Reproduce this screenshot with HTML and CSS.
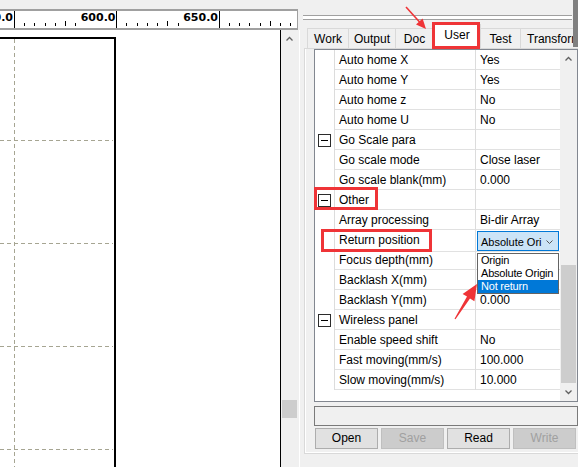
FILE: index.html
```html
<!DOCTYPE html>
<html>
<head>
<meta charset="utf-8">
<link rel="stylesheet" href="styles.css">
</head>
<body>
<div class="app">
  <div class="left">
    <div class="topgap"></div>
    <div class="ruler">
      <svg class="ruler-svg" width="297" height="17" viewBox="0 0 297 17">
        <path d="M24.5 12V15M34.5 12V15M45.5 12V15M55.5 12V15M75.5 12V15M126.5 12V15M137.5 12V15M147.5 12V15M157.5 12V15M178.5 12V15M229.5 12V15M239.5 12V15M249.5 12V15M260.5 12V15M280.5 12V15M290.5 12V15" stroke="#000" stroke-width="1"/>
        <path d="M65.5 10V15M167.5 10V15M270.5 10V15" stroke="#000" stroke-width="1"/>
        <path d="M14.5 0V17M116.5 0V17M219.5 0V17" stroke="#000" stroke-width="1"/>
        <text class="rl" x="13" y="10" text-anchor="end">550.0</text>
        <text class="rl" x="115.5" y="10" text-anchor="end">600.0</text>
        <text class="rl" x="218" y="10" text-anchor="end">650.0</text>
      </svg>
    </div>
    <div class="work">
      <div class="canvas">
        <svg width="280" height="437" viewBox="0 0 280 437">
          <g stroke="#a6a592" stroke-width="1" stroke-dasharray="4 3" fill="none">
            <path d="M14.5 9V437"/>
            <path d="M0 110.5H113M0 213.5H113M0 316.5H113M0 419.5H113"/>
          </g>
          <path d="M0 8H116M115 7V437" stroke="#000" stroke-width="2" fill="none"/>
        </svg>
      </div>
      <div class="vscroll">
        <div class="sbtn"><svg width="7" height="5" viewBox="0 0 7 5"><path d="M0.5 4.5L3.5 1.5L6.5 4.5" fill="none" stroke="#606060" stroke-width="1.3"/></svg></div>
        <div class="vtrack"><div class="vthumb"></div></div>
      </div>
      <div class="sep"></div>
    </div>
  </div>

  <div class="right">
    <div class="grip"><div class="grip-line"></div></div>
    <div class="tabs">
      <div class="tab tab-work">Work</div>
      <div class="tab tab-output">Output</div>
      <div class="tab tab-doc">Doc</div>
      <div class="tab tab-user sel">User</div>
      <div class="tab tab-test">Test</div>
      <div class="tab tab-transform">Transform</div>
    </div>
    <div class="tabbody">
      <div class="page">
        <div class="grid">
          <div class="rows">
            <div class="row"><div class="cat"></div><div class="name">Auto home X</div><div class="val">Yes</div></div>
            <div class="row"><div class="cat"></div><div class="name">Auto home Y</div><div class="val">Yes</div></div>
            <div class="row"><div class="cat"></div><div class="name">Auto home z</div><div class="val">No</div></div>
            <div class="row"><div class="cat"></div><div class="name">Auto home U</div><div class="val">No</div></div>
            <div class="row"><div class="cat"><span class="toggle"></span></div><div class="name">Go Scale para</div><div class="val"></div></div>
            <div class="row"><div class="cat"></div><div class="name">Go scale mode</div><div class="val">Close laser</div></div>
            <div class="row"><div class="cat"></div><div class="name">Go scale blank(mm)</div><div class="val">0.000</div></div>
            <div class="row"><div class="cat"><span class="toggle"></span></div><div class="name">Other</div><div class="val"></div></div>
            <div class="row"><div class="cat"></div><div class="name">Array processing</div><div class="val">Bi-dir Array</div></div>
            <div class="row"><div class="cat"></div><div class="name">Return position</div>
              <div class="val has-combo">
                <div class="combo">
                  <span>Absolute Ori</span>
                  <svg width="7" height="4" viewBox="0 0 7 4"><path d="M0.5 0.5L3.5 3.5L6.5 0.5" fill="none" stroke="#555" stroke-width="1"/></svg>
                  <div class="dropdown">
                    <div class="opt">Origin</div>
                    <div class="opt">Absolute Origin</div>
                    <div class="opt hl">Not return</div>
                  </div>
                </div>
              </div>
            </div>
            <div class="row"><div class="cat"></div><div class="name">Focus depth(mm)</div><div class="val"></div></div>
            <div class="row"><div class="cat"></div><div class="name">Backlash X(mm)</div><div class="val"></div></div>
            <div class="row"><div class="cat"></div><div class="name">Backlash Y(mm)</div><div class="val">0.000</div></div>
            <div class="row"><div class="cat"><span class="toggle"></span></div><div class="name">Wireless panel</div><div class="val"></div></div>
            <div class="row"><div class="cat"></div><div class="name">Enable speed shift</div><div class="val">No</div></div>
            <div class="row"><div class="cat"></div><div class="name">Fast moving(mm/s)</div><div class="val">100.000</div></div>
            <div class="row"><div class="cat"></div><div class="name">Slow moving(mm/s)</div><div class="val">10.000</div></div>
          </div>
          <div class="gscroll">
            <div class="sbtn"><svg width="7" height="5" viewBox="0 0 7 5"><path d="M0.5 4.5L3.5 1.5L6.5 4.5" fill="none" stroke="#606060" stroke-width="1.3"/></svg></div>
            <div class="gtrack"><div class="gthumb"></div></div>
            <div class="sbtn"><svg width="7" height="5" viewBox="0 0 7 5"><path d="M0.5 0.5L3.5 3.5L6.5 0.5" fill="none" stroke="#606060" stroke-width="1.3"/></svg></div>
          </div>
        </div>
        <div class="desc"></div>
        <div class="buttons">
          <button class="btn">Open</button>
          <button class="btn dis">Save</button>
          <button class="btn">Read</button>
          <button class="btn dis">Write</button>
        </div>
      </div>
    </div>
  </div>

  <div class="topstrip"></div>

  <svg class="annot" width="578" height="467" viewBox="0 0 578 467">
    <g fill="none" stroke="#ef3437" stroke-width="3">
      <rect x="433.5" y="23.5" width="45" height="24"/>
      <rect x="315.5" y="188.5" width="61" height="20"/>
      <rect x="322.5" y="230.5" width="108" height="20"/>
    </g>
    <line x1="406" y1="7" x2="420" y2="22.5" stroke="#ef3437" stroke-width="1.6"/>
    <polygon points="426,29 416,24.6 422.6,18.6" fill="#ef3437"/>
    <polygon points="455.5,319.3 470,298.6 474.4,301.3 477,284 462.6,293.9 467,296.6 454.5,318.7" fill="#ef3437"/>
  </svg>
</div>
</body>
</html>
```

FILE: styles.css
```css
html, body {
  margin: 0;
  padding: 0;
}
body {
  width: 578px;
  height: 467px;
  overflow: hidden;
  background: #f0f0f0;
  font-family: "Liberation Sans", Arial, sans-serif;
  font-size: 12px;
  color: #000;
}
.app {
  position: relative;
  display: flex;
  width: 600px;
  height: 467px;
}

/* ---------- left: ruler + canvas ---------- */
.left {
  width: 300px;
  flex: none;
  display: flex;
  flex-direction: column;
}
.topgap {
  height: 9px;
}
.ruler {
  width: 297px;
  height: 17px;
  background: #fff;
  border-top: 2px solid #a0a0a0;
  border-bottom: 2px solid #a0a0a0;
  border-right: 1px solid #a0a0a0;
}
.ruler-svg {
  display: block;
}
.rl {
  font-family: "DejaVu Sans", sans-serif;
  font-weight: bold;
  font-size: 11px;
  fill: #000;
}
.work {
  flex: 1;
  display: flex;
  min-height: 0;
}
.canvas {
  width: 280px;
  background: #fff;
  border-right: 1px solid #000;
  overflow: hidden;
}
.canvas svg {
  display: block;
}
.vscroll {
  width: 17px;
  background: #f0f0f0;
  display: flex;
  flex-direction: column;
}
.sbtn {
  height: 17px;
  flex: none;
  display: flex;
  align-items: center;
  justify-content: center;
}
.sbtn svg {
  display: block;
}
.vtrack {
  flex: 1;
  padding-top: 353px;
}
.vthumb {
  height: 18px;
  margin: 0 1px;
  background: #cdcdcd;
}
.sep {
  width: 2px;
  box-sizing: border-box;
  border-right: 1px solid #fff;
}

/* ---------- right panel ---------- */
.right {
  width: 300px;
  flex: none;
  display: flex;
  flex-direction: column;
}
.grip {
  height: 28px;
  box-sizing: border-box;
  padding: 15px 0 0 3px;
}
.grip-line {
  width: 269px;
  height: 5px;
  box-sizing: border-box;
  border-top: 1px solid #a0a0a0;
  border-bottom: 1px solid #a0a0a0;
  background: #fff;
}
.tabs {
  height: 20px;
  display: flex;
  align-items: flex-end;
  padding-left: 7px;
}
.tab {
  height: 20px;
  box-sizing: border-box;
  border: 1px solid #d9d9d9;
  border-bottom: none;
  margin-right: -1px;
  background: #f0f0f0;
  text-align: center;
  line-height: 21px;
  white-space: nowrap;
  flex: none;
}
.tab-work { width: 42px; }
.tab-output { width: 48px; }
.tab-doc { width: 39px; }
.tab-user { width: 48px; }
.tab-test { width: 41px; }
.tab-transform {
  width: 70px;
  text-align: left;
  padding-left: 6px;
}
.tab.sel {
  height: 24px;
  background: #fff;
  line-height: 21px;
}
.tabbody {
  margin-left: 4px;
  border: 1px solid #d9d9d9;
  border-right: none;
  background: #fff;
  padding: 0 0 1px 1px;
}
.page {
  background: #f0f0f0;
  padding: 0 0 3px 8px;
  display: flex;
  flex-direction: column;
}

/* property grid */
.grid {
  width: 264px;
  height: 353px;
  box-sizing: border-box;
  border: 1px solid #828790;
  background: #fff;
  display: flex;
}
.rows {
  flex: 1;
}
.row {
  display: grid;
  grid-template-columns: 20px 141px 84px;
  height: 20px;
}
.cat {
  border-right: 1px solid #dcdcdc;
}
.toggle {
  display: block;
  position: relative;
  width: 13px;
  height: 13px;
  box-sizing: border-box;
  border: 1px solid #2b2b2b;
  margin: 4px 0 0 3px;
}
.toggle::after {
  content: "";
  position: absolute;
  left: 2px;
  right: 2px;
  top: 5px;
  height: 1px;
  background: #000;
}
.name, .val {
  border-bottom: 1px solid #e1e1e1;
  padding: 2px 0 0 4px;
  line-height: 17px;
  white-space: nowrap;
}
.name {
  border-right: 1px solid #dcdcdc;
  overflow: hidden;
}
.val.has-combo {
  padding: 1px 1px 0 1px;
}
.combo {
  position: relative;
  height: 20px;
  box-sizing: border-box;
  border: 1px solid #0078d7;
  background: #cce4f7;
  display: flex;
  align-items: center;
  justify-content: space-between;
  padding: 1px 5px 0 3px;
  font-size: 11px;
  line-height: 14px;
}
.combo svg {
  display: block;
}
.dropdown {
  position: absolute;
  left: -1px;
  top: 21px;
  width: 82px;
  box-sizing: border-box;
  border: 1px solid #646464;
  background: #fff;
  z-index: 3;
  font-size: 11px;
  letter-spacing: -0.2px;
}
.opt {
  height: 13px;
  line-height: 13px;
  padding-left: 3px;
  white-space: nowrap;
}
.opt.hl {
  background: #0078d7;
  color: #fff;
}
.gscroll {
  width: 17px;
  flex: none;
  background: #f0f0f0;
  display: flex;
  flex-direction: column;
}
.gtrack {
  flex: 1;
  padding-top: 198px;
}
.gthumb {
  height: 118px;
  margin: 0 1px;
  background: #cdcdcd;
}

.desc {
  margin-top: 4px;
  width: 264px;
  height: 20px;
  box-sizing: border-box;
  border: 1px solid #7a7a7a;
  background: #f0f0f0;
}
.buttons {
  margin-top: 2px;
  padding-left: 1px;
  display: flex;
  gap: 3px;
}
.btn {
  width: 63px;
  height: 21px;
  box-sizing: border-box;
  margin: 0;
  padding: 0;
  border: 1px solid #adadad;
  background: #e1e1e1;
  font-family: "Liberation Sans", Arial, sans-serif;
  font-size: 12px;
  color: #000;
  line-height: 19px;
}
.btn.dis {
  background: #cccccc;
  border-color: #bfbfbf;
  color: #a0a0a0;
}

/* overlays */
.topstrip {
  position: absolute;
  left: 573px;
  top: 0;
  width: 5px;
  height: 47px;
  background: #808080;
}
.annot {
  position: absolute;
  left: 0;
  top: 0;
  pointer-events: none;
  z-index: 10;
}
```
